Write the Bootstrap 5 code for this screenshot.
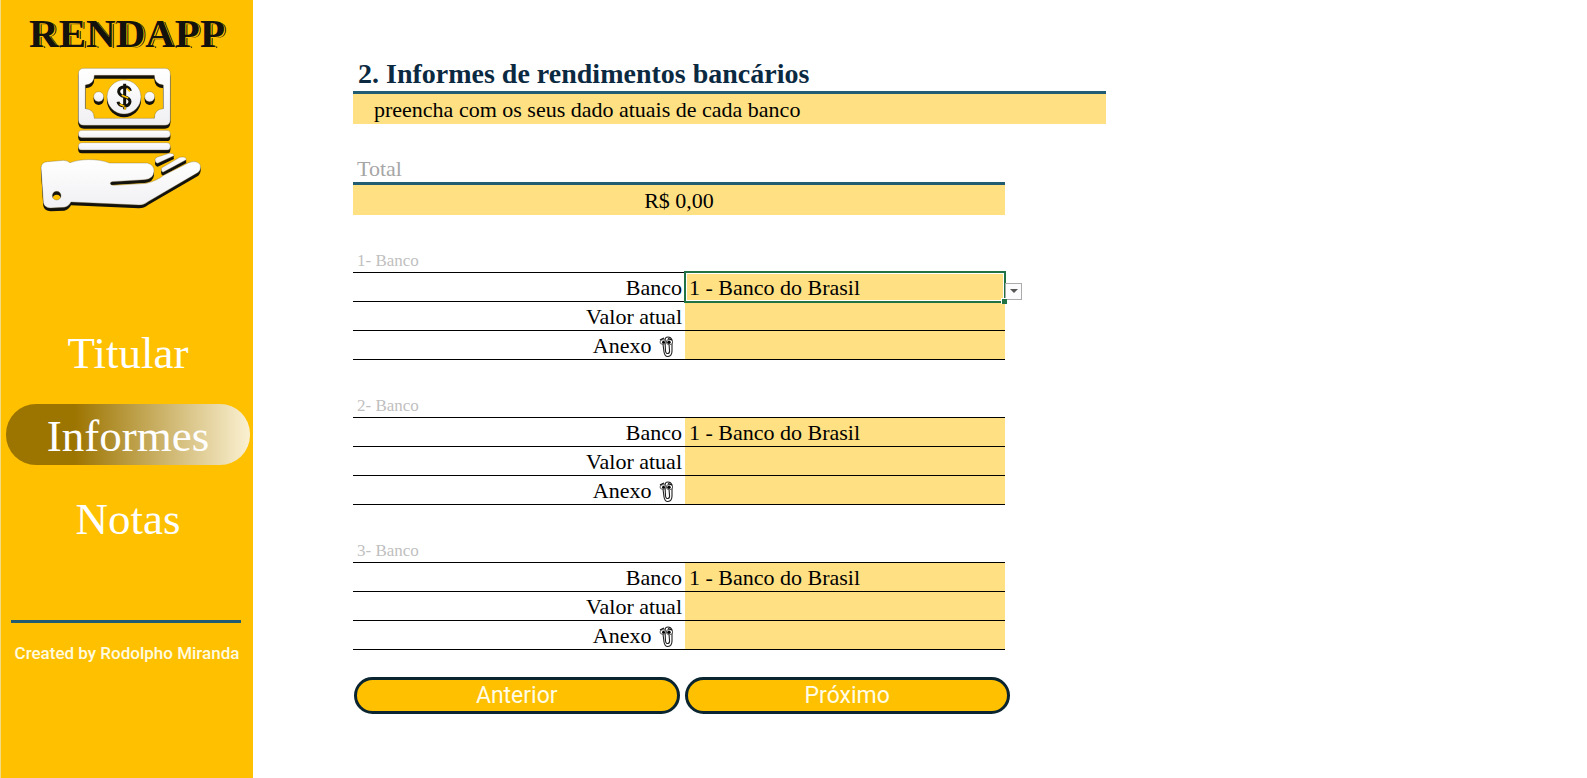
<!DOCTYPE html>
<html lang="pt-BR">
<head>
<meta charset="utf-8">
<meta name="viewport" content="width=device-width, initial-scale=1">
<title>RENDAPP - Informes</title>
<link href="https://cdn.jsdelivr.net/npm/bootstrap@5.3.0/dist/css/bootstrap.min.css" rel="stylesheet">
<style>
:root { --gold: #ffc000; --cell: #ffe082; --teal: #215c73; --ink: #0b2a42; --serif: "Liberation Serif", "Times New Roman", serif; }
body { font-family: var(--serif); font-size: 22px; line-height: 26px; color: #000; background: #fff; }
.side { width: 253px; background: var(--gold); border-left: 1px solid #f3dc86; }
.brand { font-size: 41px; font-weight: 700; line-height: 48px; padding-top: 9px; color: #14120c; text-shadow: 1px 1px 0 var(--gold), 2px 1px 0 #14120c; }
.emblem { width: 164px; height: 147px; margin: 9px 0 0 38px; }
.menu { margin-top: 108px; gap: 22px; padding: 0 3px 0 5px; }
.menu .nav-link { color: #fff; font-size: 45px; line-height: 58px; border-radius: 30px; padding: 3px 0 0; text-align: center; }
.menu .nav-link.active { background: linear-gradient(90deg, #9c7400 0%, #9c7400 28%, #fbf1d2 100%); }
.side-rule { height: 3px; background: var(--teal); margin: 72px 12px 0 10px; }
.credit { font-family: Roboto, sans-serif; font-size: 17px; font-weight: 500; line-height: 24px; color: #fffbe0; margin-top: 18px; }
.sheet { padding: 57px 24px 24px 100px; }
.wide { max-width: 753px; }
.form-area { max-width: 652px; }
.title { font-size: 28px; font-weight: 700; line-height: 34px; color: var(--ink); padding-left: 5px; border-bottom: 3px solid var(--teal); }
.hint, .total { background: var(--cell); line-height: 28px; padding-top: 2px; }
.hint { padding-left: 21px; }
.total-label { color: #a6a6a6; padding-left: 4px; margin-top: 32px; border-bottom: 3px solid var(--teal); }
.bank { margin-top: 35px; }
.bank caption { caption-side: top; color: #bfbfbf; font-size: 17px; line-height: 22px; padding: 0 0 0 4px; }
.bank table { table-layout: fixed; border-collapse: separate; border-spacing: 0; }
.bank th { width: 332px; font-weight: 400; text-align: right; padding: 2px 3px 0 0; }
.bank td { background: var(--cell); padding: 0; position: relative; }
.bank th, .bank td { height: 29px; border-bottom: 1px solid #000; }
.bank tr:first-child th, .bank tr:first-child td { border-top: 1px solid #000; height: 30px; }
.field { display: block; width: 100%; height: 28px; line-height: 26px; border: 0; padding: 2px 4px 0; background: transparent; color: #000; appearance: none; outline: 0; }
.bank td.picked { z-index: 1; }
.picked::before { content: ""; position: absolute; inset: -2px -1px; border: 2px solid #217346; box-shadow: inset 0 0 0 1px #fff; pointer-events: none; }
.picked::after { content: ""; position: absolute; right: -2px; bottom: -3px; width: 6px; height: 6px; background: #217346; border: solid #fff; border-width: 1px 0 0 1px; }
.arrow { position: absolute; left: 100%; top: 10px; width: 17px; height: 17px; padding: 0; border: 1px solid #ababab; background: #fbfbfd; display: flex; align-items: center; justify-content: center; }
.clip { width: 15px; height: 22px; margin: -2px 8px 0 2px; }
.steps { gap: 5px; margin: 27px -5px 0 1px; }
.step { flex: 1; height: 37px; line-height: 30px; padding: 0; border: 3px solid #0b2530; border-radius: 19px; background: var(--gold); color: #fffde8; font-family: Roboto, sans-serif; font-size: 23px; }
</style>
</head>
<body>
<svg class="d-none" xmlns="http://www.w3.org/2000/svg">
  <symbol id="clip" viewBox="0 0 15 22">
    <path d="M4 8L5 16Q6 21 9 20.500Q13 20 13 15V4Q12 1 9 1Q6 1 6 4L6.500 15Q7 18 9 17.500Q11 17 10.500 14L10 8" fill="none" stroke="#222" stroke-width="1.100"/>
    <ellipse cx="4" cy="6" rx="3" ry="2.300" fill="#fff" stroke="#333" stroke-width=".8"/>
    <ellipse cx="10.500" cy="6" rx="3.200" ry="2.700" fill="#fff" stroke="#333" stroke-width=".8"/>
    <circle cx="4.500" cy="6.300" r="1.500"/><circle cx="10" cy="6.300" r="1.700"/>
    <path d="M1 4L5 2M9 2.500L13 4" stroke="#111" stroke-width="1.300"/>
  </symbol>
</svg>
<div class="d-flex min-vh-100">
  <aside class="side flex-shrink-0 d-flex flex-column">
    <div class="brand text-center">RENDAPP</div>
    <svg class="emblem" viewBox="118 195 492 441" aria-hidden="true">
      <defs>
        <linearGradient id="paper" x1="0" y1="0" x2="0" y2="1"><stop offset="0" stop-color="#fff"/><stop offset="1" stop-color="#f0f0f3"/></linearGradient>
        <g id="parts">
          <path fill-rule="evenodd" d="M253 202H495Q512 202 512 219V356Q512 373 495 373H253Q236 373 236 356V219Q236 202 253 202ZM284 223Q284 250 257 252V323Q284 325 284 352H464Q464 325 491 323V252Q464 250 464 223Z"/>
          <circle cx="373" cy="288" r="51"/>
          <circle cx="297" cy="287" r="15"/>
          <circle cx="450" cy="287" r="15"/>
          <rect x="236" y="388" width="276" height="22" rx="10"/>
          <rect x="236" y="425" width="276" height="22" rx="10"/>
          <path d="M466 476Q466 470 476 467L508 457Q523 456 523 464L474 487Q466 486 466 476Z"/>
          <path d="M485 510V501L540 469Q560 465 560 476L490 514Z"/>
          <path fill-rule="evenodd" d="M124 500Q125 483 143 482L192 478Q202 478 211 485C240 474 290 471 330 486H443Q465 492 463 512Q461 534 435 536L337 542Q331 544 332 548Q333 553 342 553L440 547Q472 539 492 523L567 485Q592 476 602 492Q605 506 596 514L445 602Q433 612 418 612L214 603Q206 618 194 619L153 621Q134 620 131 605ZM171 571A13 13 0 1 0 171 597A13 13 0 1 0 171 571Z"/>
        </g>
      </defs>
      <use href="#parts" y="10" fill="#14120c"/>
      <use href="#parts" y="5" fill="#14120c"/>
      <use href="#parts" fill="url(#paper)" stroke="#6b5a2a" stroke-width="1"/>
      <path d="M392 270Q390 257 374 257Q357 259 357 272Q359 283 374 287Q391 291 391 302Q389 315 374 315Q357 314 355 302M375 248V325" fill="none" stroke="#14120c" stroke-width="9"/>
      <path d="M381 262L391 271M366 283L386 291M360 310L374 316M376 317V326" stroke="#ffc000" stroke-width="5"/>
    </svg>
    <nav class="menu nav flex-column" aria-label="Principal">
      <a class="nav-link" href="#titular">Titular</a>
      <a class="nav-link active" href="#informes" aria-current="page">Informes</a>
      <a class="nav-link" href="#notas">Notas</a>
    </nav>
    <div class="side-rule"></div>
    <div class="credit text-center text-nowrap">Created by Rodolpho Miranda</div>
  </aside>
  <main class="sheet flex-grow-1" id="informes">
    <div class="wide">
      <h1 class="title mb-0">2. Informes de rendimentos bancários</h1>
      <div class="hint">preencha com os seus dado atuais de cada banco</div>
    </div>
    <form class="form-area">
      <div class="total-label">Total</div>
      <div class="total text-center">R$ 0,00</div>
      <section class="bank">
        <table class="w-100">
          <caption>1- Banco</caption>
          <tbody>
            <tr><th scope="row"><label for="b1">Banco</label></th><td class="picked"><select class="field" id="b1"><option>1 - Banco do Brasil</option></select><button class="arrow" type="button" aria-label="Abrir lista"><svg width="8" height="5"><path d="M0 0H8L4 4Z" fill="#555"/></svg></button></td></tr>
            <tr><th scope="row"><label for="v1">Valor atual</label></th><td><input class="field" id="v1"></td></tr>
            <tr><th scope="row"><label for="a1">Anexo <svg class="clip"><use href="#clip"/></svg></label></th><td><input class="field" id="a1"></td></tr>
          </tbody>
        </table>
      </section>
      <section class="bank">
        <table class="w-100">
          <caption>2- Banco</caption>
          <tbody>
            <tr><th scope="row"><label for="b2">Banco</label></th><td><select class="field" id="b2"><option>1 - Banco do Brasil</option></select></td></tr>
            <tr><th scope="row"><label for="v2">Valor atual</label></th><td><input class="field" id="v2"></td></tr>
            <tr><th scope="row"><label for="a2">Anexo <svg class="clip"><use href="#clip"/></svg></label></th><td><input class="field" id="a2"></td></tr>
          </tbody>
        </table>
      </section>
      <section class="bank">
        <table class="w-100">
          <caption>3- Banco</caption>
          <tbody>
            <tr><th scope="row"><label for="b3">Banco</label></th><td><select class="field" id="b3"><option>1 - Banco do Brasil</option></select></td></tr>
            <tr><th scope="row"><label for="v3">Valor atual</label></th><td><input class="field" id="v3"></td></tr>
            <tr><th scope="row"><label for="a3">Anexo <svg class="clip"><use href="#clip"/></svg></label></th><td><input class="field" id="a3"></td></tr>
          </tbody>
        </table>
      </section>
      <div class="steps d-flex">
        <button class="step" type="button">Anterior</button>
        <button class="step" type="button">Próximo</button>
      </div>
    </form>
  </main>
</div>
<script src="https://cdn.jsdelivr.net/npm/bootstrap@5.3.0/dist/js/bootstrap.bundle.min.js"></script>
</body>
</html>
